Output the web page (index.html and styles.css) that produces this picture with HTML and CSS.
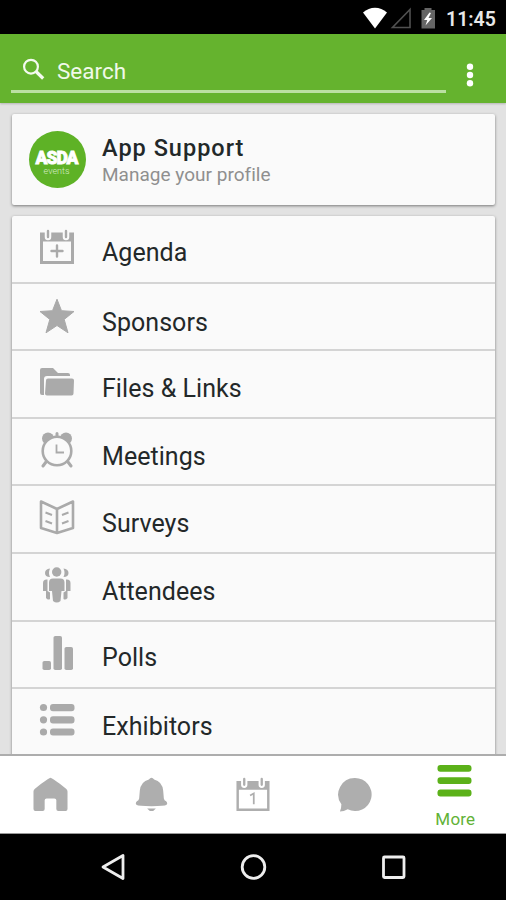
FILE: index.html
```html
<!DOCTYPE html>
<html lang="en">
<head>
<meta charset="utf-8">
<title>More</title>
<link rel="stylesheet" href="styles.css">
</head>
<body>
<div class="phone">
  <div class="status">
    <svg width="86" height="34" viewBox="-1.5 0 86 34">
      <path d="M1.500 12.500C8.500 6 18.500 6 25.500 12.500L13.500 28.500Z" fill="#fff"/>
      <path d="M31 27.500H48.500V9.500Z" fill="none" stroke="#505050" stroke-width="1.600"/>
      <path d="M63 8h7v2h3.500v18.500h-13.500V10h3z" fill="#656565"/>
      <path d="M68 12.500L62.500 20h3.300L64 25.500L70.500 18h-3.500l2.500-5z" fill="#fff"/>
    </svg>
    <span class="clock">11:45</span>
  </div>
  <header class="header">
    <div class="search">
      <svg width="24" height="24" viewBox="0 0 24 24" fill="none" stroke="#f4faef"><circle cx="9" cy="8.700" r="6.900" stroke-width="2.200"/><path d="M14 13.500L21.200 20.500" stroke-width="3.200"/></svg>
      <span>Search</span>
    </div>
    <svg class="dots" width="8" height="24" viewBox="0 0 8 24" fill="#fff"><circle cx="4" cy="3.700" r="3.200"/><circle cx="4" cy="12" r="3.200"/><circle cx="4" cy="20.300" r="3.200"/></svg>
  </header>
  <main class="content">
    <section class="card profile">
      <div class="avatar"><b>ASDA</b><small>events</small></div>
      <div class="who"><h1>App Support</h1><p>Manage your profile</p></div>
    </section>
    <ul class="card menu">
      <li><svg viewBox="0 0 36 36"><path d="M1 3.500H35V35H1ZM4 12.500V32H32V12.500Z" fill-rule="evenodd"/><path d="M9 1v7M27 1v7" stroke="#fafafa" stroke-width="6.500" stroke-linecap="round"/><path d="M9 2v6M27 2v6M18 16.500v11M12.500 22h11" stroke="#aaa" stroke-width="2.400" stroke-linecap="round"/></svg><span>Agenda</span></li>
      <li><svg viewBox="0 0 36 36"><path d="M18 1.200L22.500 12.700L35 13.500L25.200 21.400L29 34.800L18 27.500L7 34.800L10.800 21.400L1 13.500L13.500 12.700Z" stroke="#aaa" stroke-linejoin="round"/></svg><span>Sponsors</span></li>
      <li><svg viewBox="0 0 36 36"><path d="M3 4h11l5 5h10q2 0 2 2v1H8q-3 0-3 3v16H3q-2 0-2-2V6q0-2 2-2z"/><path d="M9 14.500h24q2 0 2 2l-.5 13q0 2-2 2H8q-2 0-2-2l1-13q0-2 2-2z"/></svg><span>Files &amp; Links</span></li>
      <li><svg viewBox="0 0 36 36"><circle cx="9" cy="6.500" r="6"/><circle cx="27" cy="6.500" r="6"/><path d="M18 1.500v5M7 30l-3 4M29 30l3 4" stroke="#aaa" stroke-width="3" stroke-linecap="round"/><circle cx="18" cy="19" r="14.300" fill="#fafafa" stroke="#aaa" stroke-width="2.600"/><path d="M17.500 12.500v8H25" fill="none" stroke="#aaa" stroke-width="1.800"/></svg><span>Meetings</span></li>
      <li><svg viewBox="0 0 36 36"><g fill="none" stroke="#aaa"><path d="M2 2.500L18 10L34 2.500V29L18 34L2 29ZM18 10V34" stroke-width="2.600" stroke-linejoin="round"/><path d="M6.500 13.500l6.500 2.500M6.500 22l6.500 2.500M29.500 13.500L23 16M29.500 22L23 24.500" stroke-width="2"/></g></svg><span>Surveys</span></li>
      <li><svg viewBox="0 0 36 36"><circle cx="17.700" cy="5" r="4.700"/><path d="M11 1.500Q6 2 6 6t5 4q-2-4 0-8.500zM24.500 1.500Q29.500 2 29.500 6t-5 4q2-4 0-8.500z"/><path d="M14 11.500h7.500q4 0 4 4V24h-3l-1 10q-3.700 3-7.500 0L13 24h-3v-8.500q0-4 4-4z"/><path d="M8.500 12.500Q4 12 4 16v8h3v7q2 2.500 4 1V25.500L8.500 24zM27 12.500q4.500-.5 4.500 3.500v8h-3v7q-2 2.500-4 1v-6.500L27 24z"/></svg><span>Attendees</span></li>
      <li><svg viewBox="0 0 36 36"><rect x="3.500" y="26" width="8.500" height="9" rx="1.800"/><rect x="14.500" y="1" width="8.500" height="34" rx="1.800"/><rect x="25.500" y="12" width="8.500" height="23" rx="1.800"/></svg><span>Polls</span></li>
      <li><svg viewBox="0 0 36 36"><circle cx="4.500" cy="5.500" r="3.600"/><circle cx="4.500" cy="17.800" r="3.600"/><circle cx="4.500" cy="30" r="3.600"/><rect x="11" y="2" width="24.500" height="7.200" rx="3"/><rect x="11" y="14.200" width="24.500" height="7.200" rx="3"/><rect x="11" y="26.400" width="24.500" height="7.200" rx="3"/></svg><span>Exhibitors</span></li>
    </ul>
  </main>
  <nav class="tabs">
    <a><svg viewBox="0 0 36 36"><path d="M18 .8Q19.500.8 34 12q1.500 1 1.500 3v18q0 2-2 2H26q-2 0-2-2V24q0-2-2-2h-8q-2 0-2 2v9q0 2-2 2H2.500q-2 0-2-2V15q0-2 1.500-3Q16.500.8 18 .8z"/></svg></a>
    <a><svg viewBox="0 0 36 36"><path d="M15.300 2.500q2.700-3.500 5.400 0Q29 4.500 30 14l.7 8q.4 2 2.300 3 2 2 .5 3.500-2 1.500-15.500 1.500T2.500 28.500Q1 27 3 25q1.900-1 2.300-3L6 14Q7 4.500 15.300 2.500zM13.500 32.300h9q-4.500 5.500-9 0z"/></svg></a>
    <a><svg viewBox="-.5 0 36 36"><path d="M1 4H35V35H1ZM3.500 13V32.500H32.500V13Z" fill-rule="evenodd"/><path d="M9 1v7M27 1v7" stroke="#fff" stroke-width="6.500" stroke-linecap="round"/><path d="M9 2v6M27 2v6" stroke="#aeaeae" stroke-width="2.400" stroke-linecap="round"/><path d="M15 19l3.800-2v11" fill="none" stroke="#aeaeae" stroke-width="1.800"/></svg></a>
    <a><svg viewBox="0 0 36 36"><path d="M18.500 1a17 17 0 1 1-7.500 32.200Q7 35.500 3 35.500q1.500-3 1.500-7.500A17 17 0 0 1 18.500 1z"/></svg></a>
    <a class="active"><svg viewBox="0 0 36 36"><rect x=".5" y="1" width="35" height="7" rx="3"/><rect x=".5" y="13.600" width="35" height="7" rx="3"/><rect x=".5" y="26.300" width="35" height="7" rx="3"/></svg><span>More</span></a>
  </nav>
  <footer class="system">
    <svg viewBox="0 0 28 28"><path d="M4 14L24 2.500V25.500Z"/></svg>
    <svg viewBox="0 0 28 28"><circle cx="14.500" cy="14" r="11.300"/></svg>
    <svg viewBox="0 0 28 28"><rect x="4.500" y="4" width="20.500" height="20.500" rx="1"/></svg>
  </footer>
</div>
</body>
</html>
```

FILE: styles.css
```css
* { box-sizing: border-box; }
body { margin: 0; font-family: Roboto, sans-serif; }
.phone { width: 506px; height: 900px; display: flex; flex-direction: column; background: #e2e2e2; overflow: hidden; }
.status { height: 34px; flex: none; background: #000; color: #e8e8e8; display: flex; justify-content: flex-end; align-items: center; padding-right: 11px; }
.clock { font-size: 19.5px; font-weight: 600; width: 49px; margin-top: 4px; white-space: nowrap; }
.header { height: 69px; flex: none; background: #65b32e; display: flex; padding-left: 11px; box-shadow: 0 1px 2px #0003; }
.search { width: 435px; height: 59px; border-bottom: 3px solid #bbe0a2; display: flex; padding: 24px 0 0 11px; color: #f0f9e9; font-size: 22.5px; line-height: 26px; }
.search span { margin-left: 11px; }
.dots { margin: 29px 0 0 20px; }
.content { height: 651px; flex: none; padding: 11px 11px 0 12px; overflow: hidden; }
.card { margin: 0; background: #fafafa; border-radius: 2px; box-shadow: 0 1px 3px #0007; }
.profile { height: 91px; display: flex; align-items: center; padding-left: 17px; }
.avatar { width: 57px; height: 57px; border-radius: 50%; background: #5eb226; color: #fff; display: flex; flex-direction: column; align-items: center; padding-top: 17px; }
.avatar b { font-size: 17.5px; line-height: 21px; font-weight: 900; letter-spacing: -1px; margin-left: -2px; -webkit-text-stroke: .8px #fff; }
.avatar small { font-size: 9px; line-height: 9px; margin-top: -2px; margin-left: -2px; font-weight: 300; color: #d4ebc5; }
.who { margin: 2px 0 0 16px; }
.who h1 { margin: 0; font-size: 23.5px; line-height: 28px; font-weight: 500; letter-spacing: 1px; color: #222829; }
.who p { margin: 1px 0 0; font-size: 19px; line-height: 24px; letter-spacing: .02px; color: #8f8f8f; }
.menu { list-style: none; padding: 0; margin-top: 11px; }
.menu li { height: 67.6px; border-bottom: 2px solid #d4d4d4; display: flex; padding-left: 27px; }
.menu svg { width: 36px; height: 36px; margin-top: 13px; fill: #aaa; }
.menu span { margin: 23px 0 0 27px; font-size: 25px; line-height: 30px; letter-spacing: .05px; color: #232829; }
.menu li:first-child span { margin-top: 22px; }
.menu li:nth-child(2) span { margin-top: 24px; }
.menu li:nth-child(2) svg { margin-top: 14px; }
.menu li:nth-child(7) span { margin-top: 21px; }
.tabs { height: 80px; flex: none; background: #fff; border-top: 2px solid #adadad; border-bottom: 1px solid #999; display: flex; }
.tabs a { width: 101.2px; display: flex; flex-direction: column; align-items: center; padding-top: 21px; }
.tabs svg { width: 35px; height: 35px; fill: #aeaeae; }
.tabs .active { padding: 8px 2px 0 0; color: #62b236; font-size: 17px; line-height: 20px; letter-spacing: .2px; }
.active svg { fill: #5bb119; }
.active span { margin: 10px 0 0 2px; }
.system { flex: 1; background: #000; display: flex; justify-content: center; align-items: center; gap: 112px; }
.system svg { width: 28px; height: 28px; fill: none; stroke: #eee; stroke-width: 2.8; stroke-linejoin: round; }
```
